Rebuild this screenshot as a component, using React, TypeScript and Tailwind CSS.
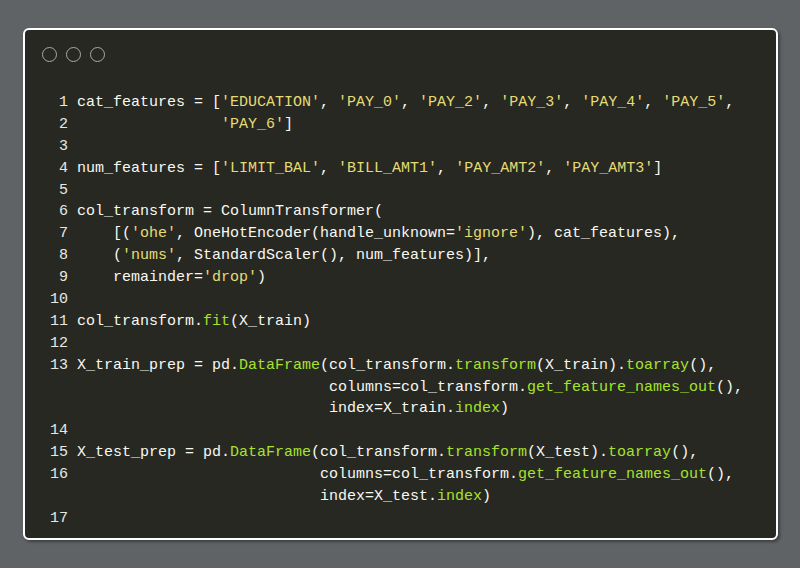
type Tok = { t: string; c?: 's' | 'f' };

const S = (t: string): Tok => ({ t, c: 's' });
const F = (t: string): Tok => ({ t, c: 'f' });
const P = (t: string): Tok => ({ t });

const rows: { n?: number; toks: Tok[] }[] = [
  { n: 1, toks: [P('cat_features = ['), S("'EDUCATION'"), P(', '), S("'PAY_0'"), P(', '), S("'PAY_2'"), P(', '), S("'PAY_3'"), P(', '), S("'PAY_4'"), P(', '), S("'PAY_5'"), P(',')] },
  { n: 2, toks: [P('                '), S("'PAY_6'"), P(']')] },
  { n: 3, toks: [] },
  { n: 4, toks: [P('num_features = ['), S("'LIMIT_BAL'"), P(', '), S("'BILL_AMT1'"), P(', '), S("'PAY_AMT2'"), P(', '), S("'PAY_AMT3'"), P(']')] },
  { n: 5, toks: [] },
  { n: 6, toks: [P('col_transform = ColumnTransformer(')] },
  { n: 7, toks: [P('    [('), S("'ohe'"), P(', OneHotEncoder(handle_unknown='), S("'ignore'"), P('), cat_features),')] },
  { n: 8, toks: [P('    ('), S("'nums'"), P(', StandardScaler(), num_features)],')] },
  { n: 9, toks: [P('    remainder='), S("'drop'"), P(')')] },
  { n: 10, toks: [] },
  { n: 11, toks: [P('col_transform.'), F('fit'), P('(X_train)')] },
  { n: 12, toks: [] },
  { n: 13, toks: [P('X_train_prep = pd.'), F('DataFrame'), P('(col_transform.'), F('transform'), P('(X_train).'), F('toarray'), P('(),')] },
  { toks: [P('                            columns=col_transform.'), F('get_feature_names_out'), P('(),')] },
  { toks: [P('                            index=X_train.'), F('index'), P(')')] },
  { n: 14, toks: [] },
  { n: 15, toks: [P('X_test_prep = pd.'), F('DataFrame'), P('(col_transform.'), F('transform'), P('(X_test).'), F('toarray'), P('(),')] },
  { n: 16, toks: [P('                           columns=col_transform.'), F('get_feature_names_out'), P('(),')] },
  { toks: [P('                           index=X_test.'), F('index'), P(')')] },
  { n: 17, toks: [] },
];

const colorOf = (c?: 's' | 'f') =>
  c === 's' ? 'text-[#e6db74]' : c === 'f' ? 'text-[#a6e22e]' : 'text-[#f8f8f2]';

export default function App() {
  return (
    <div className="w-[800px] h-[568px] bg-[#5f6366] pt-[28px] pl-[23px]">
      <div className="w-[755px] h-[512px] rounded-[6px] border-2 border-white bg-[#272822] shadow-[2px_2px_3px_rgba(0,0,0,0.35)] pt-[17px] pl-[17px]">
        <div className="flex gap-[9px]">
          <span className="w-[15px] h-[15px] rounded-full border-[1.5px] border-[#a9a9a9]" />
          <span className="w-[15px] h-[15px] rounded-full border-[1.5px] border-[#a9a9a9]" />
          <span className="w-[15px] h-[15px] rounded-full border-[1.5px] border-[#a9a9a9]" />
        </div>
        <div className="mt-[30px] pl-[8px] font-['Liberation_Mono',monospace] text-[15px] leading-[21.9px] whitespace-pre">
          {rows.map((r, i) => (
            <div key={i} className="flex h-[21.9px]">
              <span className="w-[18px] text-right text-[#e8e8e2]">{r.n ?? ''}</span>
              <span className="ml-[9px]">
                {r.toks.map((tk, j) => (
                  <span key={j} className={colorOf(tk.c)}>{tk.t}</span>
                ))}
              </span>
            </div>
          ))}
        </div>
      </div>
    </div>
  );
}
